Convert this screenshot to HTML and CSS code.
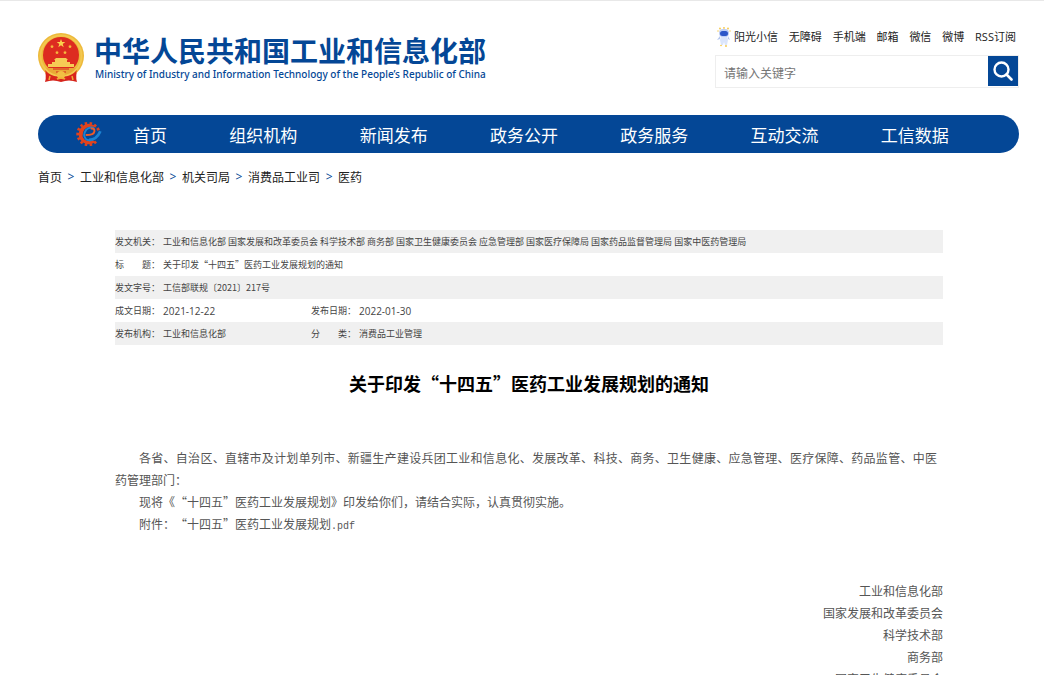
FILE: index.html
```html
<!DOCTYPE html>
<html lang="zh-CN">
<head>
<meta charset="utf-8">
<title>关于印发“十四五”医药工业发展规划的通知</title>
<meta name="viewport" content="width=device-width, initial-scale=1">
<link rel="stylesheet" href="styles.css">
</head>
<body>
<div class="page">
  <header class="header">
    <a class="brand" href="#">
      <svg class="emblem" viewBox="0 0 46 50" aria-hidden="true">
        <path d="M6 36 Q9 42 7 49 Q15 46 23 49 Q31 46 39 49 Q37 42 40 36Z" fill="#d6241c"/>
        <circle cx="23" cy="23" r="23" fill="#edb93a"/>
        <circle cx="23" cy="23" r="20.500" fill="none" stroke="#f3c850" stroke-width="2"/>
        <circle cx="23" cy="22" r="18" fill="#dd2b20"/>
        <path d="M23 6l1.100 3h3.200l-2.600 2 1 3.200L23 12.300l-2.700 1.900 1-3.200-2.600-2h3.200z" fill="#fbd24c"/>
        <g fill="#f6bd3f">
          <path id="star" d="M14 11.500l.6 1.300 1.400.1-1.100.9.400 1.400-1.300-.8-1.300.8.4-1.400-1.100-.9 1.400-.1z"/>
          <use href="#star" x="18"/>
          <use href="#star" x="5" y="6"/>
          <use href="#star" x="13" y="6"/>
        </g>
        <path d="M18 25h10l2 2h-1v2h3v2h4v3H10v-3h4v-2h3v-2h-1z" fill="#f6cb55"/>
        <path d="M8 35h30q-5 7-15 7T8 35z" fill="#e9a936"/>
        <path d="M15 36h16M18 39h10" stroke="#d6241c"/>
        <path d="M7 37q7 8 16 6 9 2 16-6l-2 7q-6 4-14 0-8 4-14 0z" fill="#d9251c"/>
        <circle cx="23" cy="42" r="4" fill="#f2bf43"/>
        <path d="M12 43l-1 4M34 43l1 4M19 46l4-1 4 1" stroke="#f0ae38" stroke-width="1.500" fill="none"/>
      </svg>
      <span class="brand-text">
        <span class="brand-cn">中华人民共和国工业和信息化部</span>
        <span class="brand-en">Ministry of Industry and Information Technology of the People’s Republic of China</span>
      </span>
    </a>
    <div class="tools">
      <nav class="links" aria-label="快捷入口">
        <a class="robot-link" href="#">
          <svg class="robot" viewBox="0 0 14 20" aria-hidden="true">
            <path d="M3 9L0 13l3-1zM11 9l2 4-2-1z" fill="#b5c7ef"/>
            <path d="M4 8h6l1 5-1 5H8l-1-3-1 3H4l-1-5z" fill="#dbe5fb"/>
            <rect x="2" y="2" width="10" height="8" rx="4" fill="#bdcdf5"/>
            <rect x="3" y="4" width="8" height="5" rx="2.500" fill="#2c56c8"/>
            <g fill="#f5c542"><circle cx="3" cy="1.500" r=".9"/><circle cx="7" cy=".9" r=".9"/><circle cx="11" cy="1.500" r=".9"/><circle cx="1" cy="4" r=".7"/><circle cx="13" cy="4" r=".7"/><circle cx="4" cy="18.500" r=".8"/><circle cx="9" cy="19" r=".9"/></g>
          </svg>阳光小信</a>
        <a href="#">无障碍</a>
        <a href="#">手机端</a>
        <a href="#">邮箱</a>
        <a href="#">微信</a>
        <a href="#">微博</a>
        <a href="#">RSS订阅</a>
      </nav>
      <form class="search">
        <input class="search-input" type="text" placeholder="请输入关键字" aria-label="请输入关键字">
        <button class="search-button" type="button" aria-label="搜索">
          <svg class="search-icon" viewBox="0 0 20 20" aria-hidden="true"><circle cx="8.500" cy="8.500" r="7" fill="none" stroke="#fff" stroke-width="2.400"/><path d="M13.500 13.500l5 5" stroke="#fff" stroke-width="2.600" stroke-linecap="round"/></svg>
        </button>
      </form>
    </div>
  </header>

  <nav class="nav" aria-label="主导航">
    <svg class="nav-logo" viewBox="0 0 24 24" aria-hidden="true">
      <circle cx="11.500" cy="12" r="9.900" fill="none" stroke="#e2431d" stroke-width="2.600" stroke-dasharray="2.300 2.100 2.300 2.100 2.300 2.100 2.300 2.100 2.300 2.100 2.300 2.100 2.300 2.100 2.300 2.100 2.300 2.100 2.300 2.100 2.300 2.100 2.300 20" transform="rotate(45 11.500 12)"/>
      <path d="M19 6A9.400 9.400 0 1 0 17.500 19.500L15.500 17.500Q8 20 6 14 6 6 13 5.500 17 5 19 6z" fill="#e2431d"/>
      <path d="M12 17.500q7 0 10.500-8" fill="none" stroke="#1c83d2" stroke-width="2.600"/>
      <path d="M17 7q-4-2.500-7.500 1-3.500 5-.5 8.500 2 2 5 1" fill="none" stroke="#1c83d2" stroke-width="1.800"/>
      <path d="M9 13q7.500 0 8-3.500.3-3.200-3.500-2.500" fill="none" stroke="#f05a28" stroke-width="1.800"/>
    </svg>
    <a class="nav-item nav-home" href="#">首页</a>
    <a class="nav-item" href="#">组织机构</a>
    <a class="nav-item" href="#">新闻发布</a>
    <a class="nav-item" href="#">政务公开</a>
    <a class="nav-item" href="#">政务服务</a>
    <a class="nav-item" href="#">互动交流</a>
    <a class="nav-item" href="#">工信数据</a>
  </nav>

  <nav class="crumbs" aria-label="当前位置">
    <a href="#">首页</a><span class="sep">&gt;</span><a href="#">工业和信息化部</a><span class="sep">&gt;</span><a href="#">机关司局</a><span class="sep">&gt;</span><a href="#">消费品工业司</a><span class="sep">&gt;</span><a href="#">医药</a>
  </nav>

  <main class="article">
    <table class="meta">
      <colgroup><col class="col-label"><col class="col-value"><col class="col-label"><col></colgroup>
      <tbody>
        <tr><th scope="row">发文机关：</th><td colspan="3">工业和信息化部 国家发展和改革委员会 科学技术部 商务部 国家卫生健康委员会 应急管理部 国家医疗保障局 国家药品监督管理局 国家中医药管理局</td></tr>
        <tr><th scope="row">标　　题：</th><td colspan="3">关于印发“十四五”医药工业发展规划的通知</td></tr>
        <tr><th scope="row">发文字号：</th><td colspan="3">工信部联规〔2021〕217号</td></tr>
        <tr><th scope="row">成文日期：</th><td class="date">2021-12-22</td><th scope="row">发布日期：</th><td class="date">2022-01-30</td></tr>
        <tr><th scope="row">发布机构：</th><td>工业和信息化部</td><th scope="row">分　　类：</th><td>消费品工业管理</td></tr>
      </tbody>
    </table>
    <h1 class="title">关于印发“十四五”医药工业发展规划的通知</h1>
    <div class="content">
      <p>各省、自治区、直辖市及计划单列市、新疆生产建设兵团工业和信息化、发展改革、科技、商务、卫生健康、应急管理、医疗保障、药品监管、中医<span class="keep">药管理部门：</span></p>
      <p>现将《“十四五”医药工业发展规划》印发给你们，请结合实际，认真贯彻实施。</p>
      <p>附件：<a href="#">“十四五”医药工业发展规划<span class="ext">.pdf</span></a></p>
    </div>
    <div class="signers">
      <p>工业和信息化部</p>
      <p>国家发展和改革委员会</p>
      <p>科学技术部</p>
      <p>商务部</p>
      <p>国家卫生健康委员会</p>
    </div>
  </main>
</div>
</body>
</html>
```
FILE: styles.css
```css
* { box-sizing: border-box; }

body {
  margin: 0;
  background: #fff;
  color: #222;
  border-top: 1px solid #e8e8e8;
  font-family: "Noto Sans CJK SC", "Open Sans", sans-serif;
  font-size: 12px;
  text-spacing-trim: space-all;
}

a { color: inherit; text-decoration: none; }
p { margin: 0; }

.page { padding: 0 25px 0 38px; }

.header {
  display: flex;
  justify-content: space-between;
  align-items: flex-start;
  padding-top: 26px;
}

.brand { display: flex; gap: 10px; padding-top: 6px; color: #044796; }
.emblem { width: 46px; height: 50px; }
.brand-text { display: flex; flex-direction: column; white-space: nowrap; }
.brand-cn { font-size: 28px; font-weight: 700; line-height: 34px; }
.brand-en {
  padding-left: 1px;
  font-family: "Noto Sans", sans-serif;
  font-size: 10px;
  font-weight: 500;
  line-height: 15px;
}

.tools { width: 304px; }
.links {
  display: flex;
  justify-content: space-between;
  align-items: center;
  height: 20px;
  padding: 0 3px 0 2px;
  font-family: "Open Sans", "Noto Sans CJK SC", sans-serif;
  font-size: 11px;
  line-height: 20px;
  white-space: nowrap;
}
.robot-link { display: flex; align-items: center; gap: 3px; }
.robot { width: 14px; height: 20px; }

.search {
  display: flex;
  align-items: flex-start;
  height: 33px;
  margin-top: 8px;
  border: 1px solid #eee;
}
.search-input {
  flex: 1;
  min-width: 0;
  height: 31px;
  padding: 2px 8px 0;
  border: 0;
  outline: 0;
  background: transparent;
  font-family: inherit;
  font-size: 12px;
}
.search-input::placeholder { color: #757575; opacity: 1; }
.search-button {
  display: grid;
  place-items: center;
  width: 30px;
  height: 30px;
  padding: 0;
  border: 0;
  background: #044796;
}
.search-icon { width: 20px; height: 20px; }

.nav {
  display: flex;
  align-items: center;
  height: 38px;
  margin-top: 27px;
  padding-left: 38px;
  border-radius: 19px;
  background: #044796;
  color: #fff;
  font-size: 17px;
}
.nav-logo { flex: none; width: 26px; height: 26px; }
.nav-item { flex: 130; text-align: center; white-space: nowrap; }
.nav-home { flex: 96; }
.nav-item:last-child { margin-right: 39px; }

.crumbs { display: flex; margin-top: 15px; line-height: 18px; }
.sep { width: 18px; color: #044796; text-align: center; font-family: "Open Sans", sans-serif; }

.article { padding: 44px 76px 0 77px; }

.meta {
  width: 100%;
  border-collapse: collapse;
  table-layout: fixed;
  color: #444;
  font-size: 9px;
}
.meta tr:nth-child(odd) { background: #f0f0f0; }
.meta th, .meta td {
  height: 23px;
  padding: 0;
  font-weight: 400;
  line-height: 20px;
  text-align: left;
  white-space: nowrap;
}
.meta .date { font-family: "Open Sans", sans-serif; font-size: 10px; }
.col-label { width: 48px; }
.col-value { width: 148px; }

.title {
  margin: 25px 0 0;
  color: #000;
  font-size: 18px;
  font-weight: 700;
  line-height: 26px;
  text-align: center;
}

.content {
  margin-top: 51px;
  padding-right: 6px;
  color: #555;
  line-height: 22px;
  text-align: justify;
}
.content p { text-indent: 24px; }
.keep { display: inline-block; text-indent: 0; }
.ext { font-family: "Liberation Mono", monospace; font-size: 10px; }

.signers {
  margin-top: 42px;
  color: #555;
  line-height: 22px;
  text-align: right;
}
```
